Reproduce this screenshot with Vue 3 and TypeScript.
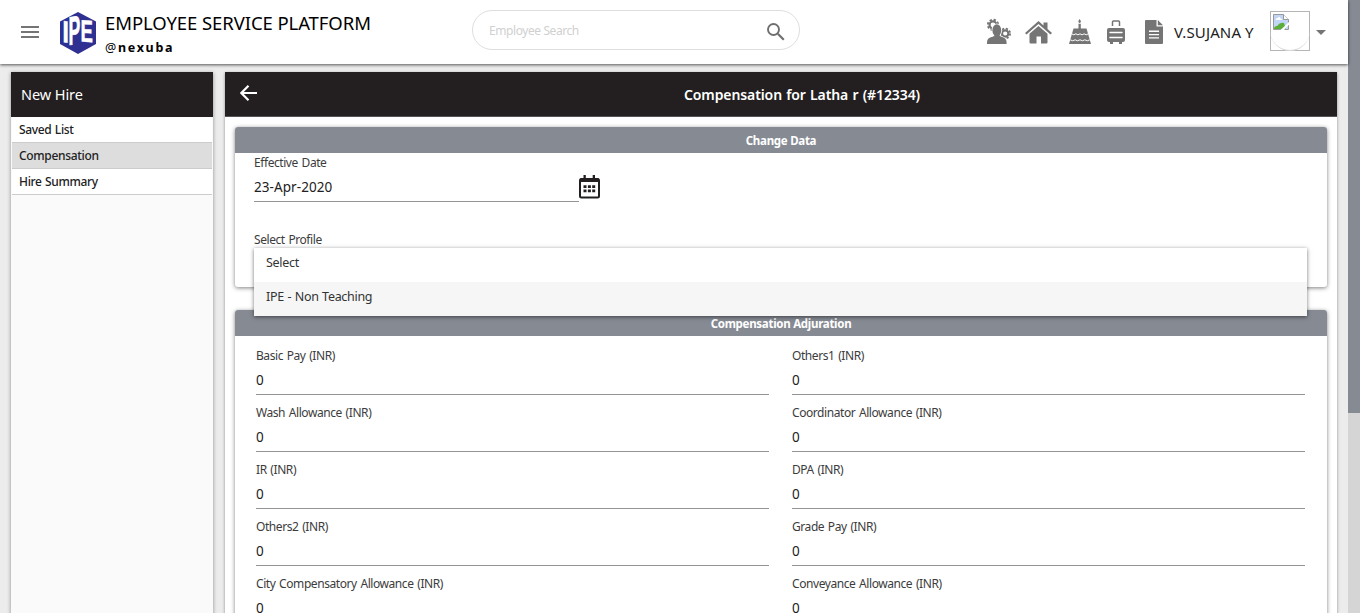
<script setup lang="ts">
import { ref } from 'vue'

interface PayField { label: string; value: string }

const menu: string[] = ['Saved List', 'Compensation', 'Hire Summary']
const active = ref('Compensation')
const options: string[] = ['Select', 'IPE - Non Teaching']
const highlighted = ref('IPE - Non Teaching')

const fields: PayField[] = [
  { label: 'Basic Pay (INR)', value: '0' },
  { label: 'Others1 (INR)', value: '0' },
  { label: 'Wash Allowance (INR)', value: '0' },
  { label: 'Coordinator Allowance (INR)', value: '0' },
  { label: 'IR (INR)', value: '0' },
  { label: 'DPA (INR)', value: '0' },
  { label: 'Others2 (INR)', value: '0' },
  { label: 'Grade Pay (INR)', value: '0' },
  { label: 'City Compensatory Allowance (INR)', value: '0' },
  { label: 'Conveyance Allowance (INR)', value: '0' },
]
</script>

<template>
  <div class="window">
    <div class="page">
      <header class="topbar">
        <svg class="burger" width="18" height="12" viewBox="0 0 18 12"><path d="M0 0h18v2H0zM0 5h18v2H0zM0 10h18v2H0z" fill="#757575" /></svg>
        <svg class="logo" width="36" height="42" viewBox="0 0 36 42">
          <path d="M18 0 36 9.500V32L18 42 0 32V9.500z" fill="#2e3192" />
          <g fill="#fff" stroke="#fff" font-family="Liberation Sans, sans-serif" font-weight="700">
            <text transform="matrix(.8 .12 0 1 2.300 30)" font-size="31" stroke-width=".3">I</text>
            <text transform="matrix(.44 -.06 0 1 8.400 33)" font-size="40" stroke-width=".9">P</text>
            <text transform="matrix(.6 .04 0 1 20.500 29.500)" font-size="31" stroke-width=".5">E</text>
          </g>
        </svg>
        <div class="brand">
          <div class="brand-name">EMPLOYEE SERVICE PLATFORM</div>
          <div class="brand-user"><span class="at">@</span>nexuba</div>
        </div>
        <div class="search">
          <span>Employee Search</span>
          <svg width="18" height="18" viewBox="0 0 18 18"><circle cx="6.500" cy="6.500" r="5.500" fill="none" stroke="#6f6f6f" stroke-width="1.900" /><path d="m10.800 10.800 6 6" stroke="#6f6f6f" stroke-width="2.200" /></svg>
        </div>
        <nav class="icons">
          <svg class="i-people" width="24" height="26" viewBox="0 0 24 26">
            <g fill="none" stroke="#757575">
              <circle cx="6" cy="6.900" r="3.500" stroke-width="2.200" /><circle cx="6" cy="6.900" r="5.200" stroke-width="1.800" stroke-dasharray="2.300 1.780" />
              <circle cx="18.200" cy="15.500" r="3.200" stroke-width="2.200" /><circle cx="18.200" cy="15.500" r="4.900" stroke-width="1.800" stroke-dasharray="2.200 1.650" />
            </g>
            <g fill="#757575" stroke="#fff" stroke-width="1.600" paint-order="stroke">
              <path d="M7 16h6v2c1 .9 5 1.500 6 3.700.6 1.200.6 3 .6 4.300H0c0-1.300 0-3 .6-4.300C1.700 19.500 6 18.900 7 18z" />
              <ellipse cx="9.800" cy="12.200" rx="4.400" ry="6" />
            </g>
            <path d="M7.300 16h5.400v3H7.300z" fill="#757575" />
          </svg>
          <svg class="i-home" width="27" height="23" viewBox="0 0 27 23"><path d="M13.500 0 18.500 4.400V1.400H22.500V8L27 12.100 25.500 13.600 13.500 3.100 1.500 13.600 0 12.100z" fill="#757575" /><path d="M13.500 5 22.500 12.800V21.600a1 1 0 0 1-1 1H16V15.500H11.500v7.100H5.500a1 1 0 0 1-1-1v-8.800z" fill="#757575" /></svg>
          <svg class="i-cake" width="22" height="25" viewBox="0 0 22 25">
            <path d="M10.600 0c1.700 2 1.800 3.500 0 4-1.700-.500-1.600-2 0-4zM9.500 4.800h2.300V10H9.500z" fill="#757575" />
            <path d="M4.500 9.500h13L22 25H0z" fill="#757575" />
            <path d="M2.700 14.800q2.100 2 4.200 0 2 2.100 4.100 0 2.100 2.100 4.100 0 2.100 2 4.200 0M1.200 20.800q2.400 1.900 4.900 0 2.400 1.900 4.900 0 2.500 1.900 4.900 0 2.500 1.900 4.900 0" fill="none" stroke="#fff" stroke-width="1" />
          </svg>
          <svg class="i-bag" width="18" height="24" viewBox="0 0 18 24"><path d="M5.500 6V2q0-1 1-1h5q1 0 1 1v4" fill="none" stroke="#757575" stroke-width="1.500" /><path d="M2 8h14a2 2 0 0 1 2 2v10a2 2 0 0 1-2 2h-1v2h-3v-2H6v2H3v-2H2a2 2 0 0 1-2-2V10q0-2 2-2z" fill="#757575" /><path d="M3 12.500h12M3 17.500h12" stroke="#fff" stroke-width="1.500" stroke-linecap="round" /></svg>
          <svg class="i-doc" width="18" height="24" viewBox="0 0 18 24"><path d="M1 0h10.500v6.500H18V23q0 1-1 1H1q-1 0-1-1V1q0-1 1-1zM12.800 0 18 5.200h-5.200z" fill="#757575" /><path d="M4 11.300h10M4 14.600h10M4 17.900h10" stroke="#fff" stroke-width="1.400" /></svg>
        </nav>
        <span class="username">V.SUJANA Y</span>
        <div class="avatar">
          <span class="avatar-ring"></span>
          <svg width="16" height="16" viewBox="0 0 16 16"><path d="M.5.5h10l5 5v10H.5z" fill="#c3d5f5" stroke="#999" /><path d="M10.500.500v5h5" fill="#fff" stroke="#999" /><path d="M2.500 6q0-2 2-2 2-2 3 .500 1.500 0 1.500 1.500z" fill="#fff" /><path d="M1 15Q1 12 4 12 7 8 11 9l2 6z" fill="#5bae38" /><path d="m7.500 16 8.500-8v2.800L11 16z" fill="#fff" /></svg>
        </div>
        <span class="caret"></span>
      </header>

      <div class="body">
        <aside class="sidebar">
          <h2>New Hire</h2>
          <ul>
            <li v-for="item in menu" :key="item" :class="{ active: item === active }" @click="active = item">{{ item }}</li>
          </ul>
        </aside>

        <main class="content">
          <div class="content-head">
            <svg width="17" height="16" viewBox="0 0 17 16"><path d="M17 8H1.500M8.500.800 1.300 8l7.200 7.200" fill="none" stroke="#fff" stroke-width="2.200" /></svg>
            <h1>Compensation for Latha r (#12334)</h1>
          </div>

          <section class="card change">
            <h3>Change Data</h3>
            <div class="card-body">
              <div class="date-row">
                <div class="date-field">
                  <div class="label">Effective Date</div>
                  <div class="value date">23-Apr-2020</div>
                </div>
                <svg width="21" height="24" viewBox="0 0 21 24"><rect x="1" y="4" width="19" height="18.500" rx="1.500" fill="none" stroke="#231f20" stroke-width="2" /><path d="M1 3.500h19V7H1zM4.500 0h2.300v5H4.500zM13.700 0H16v5h-2.300z" fill="#231f20" /><path d="M4.500 10.200h3v2.700h-3zm4.400 0h3v2.700h-3zm4.300 0h3v2.700h-3zM4.500 14.500h3v2.700h-3zm4.400 0h3v2.700h-3zm4.300 0h3v2.700h-3z" fill="#231f20" /></svg>
              </div>
              <div class="select-field">
                <div class="label">Select Profile</div>
                <ul class="dropdown">
                  <li v-for="o in options" :key="o" :class="{ highlighted: o === highlighted }" @mouseenter="highlighted = o">{{ o }}</li>
                </ul>
              </div>
            </div>
          </section>

          <section class="card adjust">
            <h3>Compensation Adjuration</h3>
            <div class="fields">
              <div v-for="f in fields" :key="f.label" class="field">
                <div class="label">{{ f.label }}</div>
                <div class="value">{{ f.value }}</div>
              </div>
            </div>
          </section>
        </main>
      </div>
    </div>
    <div class="scrollbar"><div class="thumb"></div></div>
  </div>
</template>

<style>
body { margin: 0; overflow: hidden; }
</style>

<style scoped>
* { box-sizing: border-box; }
.window { display: flex; height: 613px; overflow: hidden; background: #ececec; font-family: "Noto Sans", "Open Sans", sans-serif; color: #212121; white-space: nowrap; }
.page { width: 1348px; height: 613px; display: flex; flex-direction: column; }
svg { display: block; flex: none; }
h1, h2, h3, ul { margin: 0; padding: 0; font-weight: 400; list-style: none; }
.scrollbar { width: 12px; background: #d5d5d5; }
.thumb { height: 413px; background: #868a93; }

.topbar { display: flex; height: 64px; flex: none; background: #fff; box-shadow: 0 1px 3px rgba(0, 0, 0, .65); padding-left: 21px; position: relative; }
.burger { margin-top: 26px; }
.logo { margin: 12px 0 0 21px; overflow: visible; }
.brand { width: 367px; margin: 10px 0 0 9px; color: #000; }
.brand-name { font-size: 18.500px; line-height: 25px; letter-spacing: -.080px; }
.brand-user { margin-top: 2px; font-size: 12.500px; line-height: 22px; font-weight: 700; letter-spacing: 1.700px; }
.at { font-weight: 400; }
.search { display: flex; justify-content: space-between; width: 328px; height: 40px; margin-top: 10px; padding: 0 14px 0 16px; border: 1px solid #dedede; border-radius: 20px; color: #d0d0d0; font-size: 12px; line-height: 39px; letter-spacing: -.420px; }
.search svg { margin-top: 12px; }
.icons { display: flex; margin-left: 187px; }
.i-people { margin-top: 18px; }
.i-home { margin: 21px 0 0 14px; }
.i-cake { margin: 19px 0 0 17px; }
.i-bag { margin: 20px 0 0 16px; }
.i-doc { margin: 20px 0 0 20px; }
.username { width: 96px; margin-left: 11px; font-size: 15px; line-height: 64px; letter-spacing: .120px; }
.avatar { position: relative; width: 40px; height: 40px; margin-top: 11px; padding: 2px; border: 1px solid #b5b5b5; }
.avatar-ring { position: absolute; inset: -2px -1px -1px -1px; border-radius: 50%; border-bottom: 1px solid #d8d8d8; }
.caret { width: 0; height: 0; margin: 30px 0 0 6px; border: 5px solid transparent; border-top-color: #757575; border-bottom: 0; }

.body { display: flex; gap: 12px; padding: 8px 11px 0; height: 549px; overflow: hidden; }
.sidebar { width: 202px; height: 560px; flex: none; background: #fafafa; box-shadow: 0 1px 4px rgba(0, 0, 0, .4); }
.sidebar h2 { height: 45px; padding-left: 10px; background: #231f20; color: #fff; font-size: 14.500px; line-height: 45px; letter-spacing: -.080px; }
.sidebar li { height: 26px; margin: 0 1px; padding-left: 7px; background: #fff; border-bottom: 1px solid #ccc; font-size: 12px; font-weight: 500; line-height: 26px; letter-spacing: -.330px; word-spacing: .6px; }
.sidebar li.active { background: #ddd; }
.content { flex: 1; height: 560px; background: #fff; box-shadow: 0 1px 3px rgba(0, 0, 0, .4); }
.content-head { display: flex; align-items: center; height: 45px; padding-left: 15px; background: #231f20; color: #fff; border-bottom: 1px solid #555; }
.content-head svg { margin-bottom: 3px; }
.content-head h1 { flex: 1; margin-left: 10px; text-align: center; font-size: 14px; font-weight: 600; letter-spacing: -.100px; word-spacing: .700px; }
.card { margin: 10px 10px 0; background: #fff; border-radius: 3px; box-shadow: 0 1px 4px rgba(0, 0, 0, .5); }
.card h3 { height: 26px; background: #868a93; color: #fff; border-radius: 3px 3px 0 0; text-align: center; font-size: 11.500px; font-weight: 700; line-height: 27px; letter-spacing: -.280px; }
.change { height: 160px; }
.adjust { margin-top: 23px; height: 340px; }
.card-body { padding: 0 20px 0 19px; }
.date-row { display: flex; }
.date-field { width: 325px; }
.date-row svg { margin-top: 22px; }
.label { font-size: 12px; line-height: 20px; height: 20px; letter-spacing: -.430px; word-spacing: 1px; color: #3c3c3c; }
.value { height: 29px; font-size: 13.500px; line-height: 28px; border-bottom: 1px solid #949494; }
.date { letter-spacing: .080px; }
.select-field { position: relative; margin-top: 28px; }
.dropdown { position: absolute; top: 18px; left: 0; width: 100%; z-index: 2; background: #fff; box-shadow: 0 1px 4px rgba(0, 0, 0, .55); }
.dropdown li { height: 34px; padding-left: 12px; font-size: 12.500px; line-height: 30px; letter-spacing: -.300px; word-spacing: .6px; color: #333; }
.dropdown .highlighted { background: #f6f6f6; }
.fields { display: grid; grid-template-columns: 513px 513px; column-gap: 23px; padding: 2px 21px; }
.field { height: 57px; padding-top: 8px; }
</style>
